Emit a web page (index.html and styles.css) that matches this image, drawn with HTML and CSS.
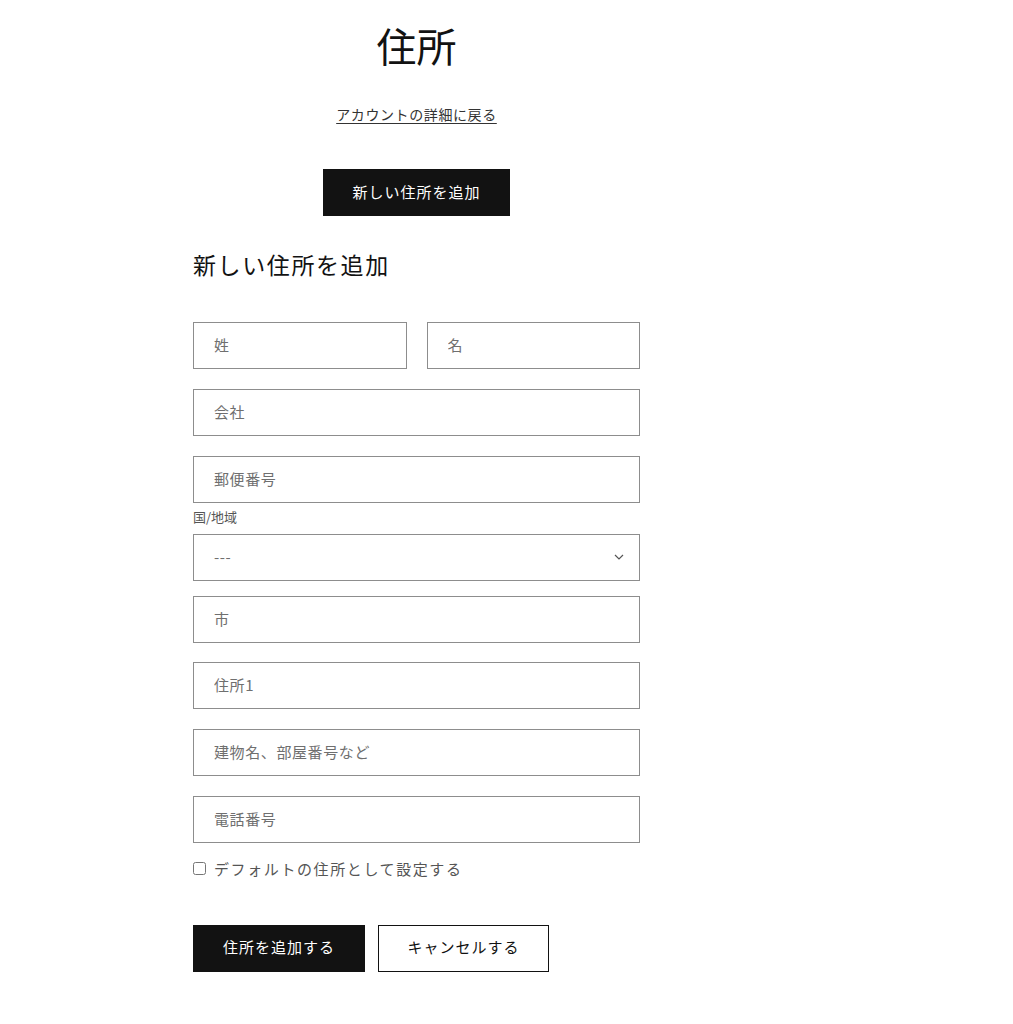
FILE: index.html
```html
<!DOCTYPE html>
<html lang="ja">
<head>
  <meta charset="UTF-8" />
  <meta name="viewport" content="width=device-width, initial-scale=1.0"/>
  <title>住所</title>
  <link rel="stylesheet" href="styles.css">
</head>
<body>
  <div class="page">
    <h1 class="title">住所</h1>
    <a class="back-link" href="#">アカウントの詳細に戻る</a>

    <div class="center">
      <button class="btn btn-dark btn-new" type="button">新しい住所を追加</button>
    </div>

    <form class="address-form">
      <h2 class="form-title">新しい住所を追加</h2>

      <div class="row-half">
        <input class="field" type="text" placeholder="姓">
        <input class="field" type="text" placeholder="名">
      </div>
      <input class="field" type="text" placeholder="会社">
      <input class="field field-zip" type="text" placeholder="郵便番号">

      <label class="select-label" for="country">国/地域</label>
      <div class="select-wrap">
        <select class="field select" id="country">
          <option>---</option>
        </select>
        <svg class="chevron" width="10" height="6" viewBox="0 0 10 6" fill="none">
          <path d="M1 1l4 4 4-4" stroke="#555" stroke-width="1.2"/>
        </svg>
      </div>

      <input class="field field-city" type="text" placeholder="市">
      <input class="field" type="text" placeholder="住所1">
      <input class="field" type="text" placeholder="建物名、部屋番号など">
      <input class="field field-last" type="text" placeholder="電話番号">

      <label class="check">
        <input type="checkbox">
        <span>デフォルトの住所として設定する</span>
      </label>

      <div class="actions">
        <button class="btn btn-dark btn-submit" type="button">住所を追加する</button>
        <button class="btn btn-outline btn-cancel" type="button">キャンセルする</button>
      </div>
    </form>
  </div>
</body>
</html>
```

FILE: styles.css
```css
body {
  margin: 0;
  font-family: "Noto Sans CJK JP", "Noto Sans", sans-serif;
  color: #121212;
  background: #fff;
}
.page {
  width: 447px;
  margin-left: 193px;
  padding-top: 19px;
  text-align: center;
}
.title {
  font-size: 40px;
  font-weight: 400;
  line-height: 1.3;
  margin: 0 0 30px;
}
.back-link {
  display: inline-block;
  font-size: 14px;
  letter-spacing: 0.6px;
  color: #333;
  text-decoration: underline;
  text-underline-offset: 3px;
  line-height: 20px;
}
.center {
  margin-top: 44px;
}
.btn {
  font-family: inherit;
  font-size: 15px;
  letter-spacing: 1px;
  height: 47px;
  padding: 0 0 3px;
  cursor: pointer;
  border-radius: 0;
}
.btn-dark {
  background: #121212;
  color: #fff;
  border: none;
}
.btn-outline {
  background: #fff;
  color: #121212;
  border: 1px solid #121212;
}
.btn-new {
  width: 187px;
}
.address-form {
  text-align: left;
  display: flex;
  flex-direction: column;
}
.form-title {
  font-size: 23px;
  font-weight: 400;
  letter-spacing: 1.6px;
  line-height: 1.3;
  margin: 34px 0 42px;
}
.row-half {
  display: flex;
  gap: 20px;
}
.row-half .field {
  flex: 1;
  min-width: 0;
}
.field {
  box-sizing: border-box;
  height: 47px;
  width: 100%;
  border: 1px solid #8d8d8d;
  padding: 0 20px 2px;
  font-family: inherit;
  font-size: 15px;
  letter-spacing: 0.6px;
  color: #121212;
  background: #fff;
  border-radius: 0;
  outline: none;
  margin-bottom: 20px;
}
.field::placeholder {
  color: #6f6f6f;
}
.field-zip {
  margin-bottom: 4px;
}
.select-label {
  font-size: 13px;
  color: #555;
  line-height: 20px;
  margin-bottom: 7px;
}
.select-wrap {
  position: relative;
}
.select {
  appearance: none;
  -webkit-appearance: none;
  color: #6f6f6f;
  margin-bottom: 15px;
}
.chevron {
  position: absolute;
  right: 16px;
  top: 20px;
}
.field-city {
  margin-bottom: 19px;
}
.field-last {
  margin-bottom: 14px;
}
.check {
  display: flex;
  align-items: center;
  gap: 8px;
  font-size: 15px;
  letter-spacing: 1.6px;
  color: #555;
  line-height: 24px;
}
.check input {
  margin: 0;
  width: 13px;
  height: 13px;
}
.actions {
  display: flex;
  gap: 13px;
  margin-top: 44px;
}
.btn-submit {
  width: 172px;
}
.btn-cancel {
  width: 171px;
}
```
